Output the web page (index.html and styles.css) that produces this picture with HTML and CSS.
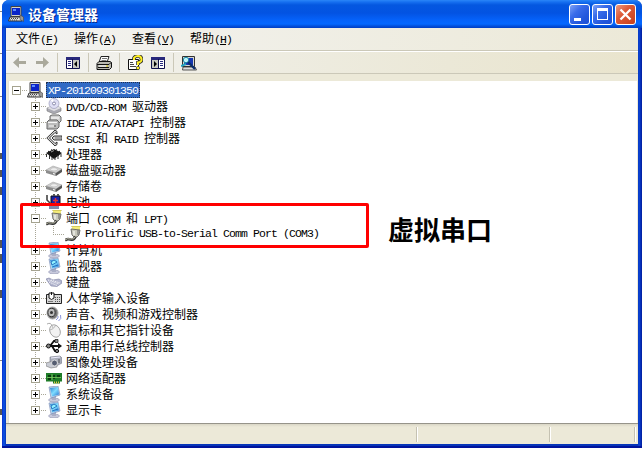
FILE: index.html
```
<!DOCTYPE html>
<html lang="zh-CN">
<head>
  <meta charset="UTF-8" />
  <title>设备管理器</title>
  <link rel="stylesheet" href="styles.css">
</head>
<body>
  <!-- shared icons -->
  <svg class="defs" width="0" height="0">
    <defs>
      <linearGradient id="screen" x1="0" y1="0" x2="1" y2="1">
        <stop offset="0" stop-color="#2a7fd0"/><stop offset="0.5" stop-color="#7fdcff"/><stop offset="1" stop-color="#2470d0"/>
      </linearGradient>
    </defs>
    <symbol id="pc" viewBox="0 0 16 16">
      <path d="M3 .5h10v10H3z" fill="#d4d4cc" stroke="#444" stroke-width="1"/>
      <path d="M4 2h8v7H4z" fill="#0a24c8"/><path d="M5 3h3v2H5z" fill="#5a8cff"/>
      <path d="M2 11h11l1 4H.5z" fill="#e0e0e0" stroke="#333" stroke-width="1"/>
      <path d="M3 12.500h8M2 14h8" stroke="#444" stroke-dasharray="1 1"/>
      <path d="M12 9l3.500 2v4.500l-3.500-2z" fill="#999" stroke="#444" stroke-width=".6"/>
    </symbol>
    <symbol id="disk" viewBox="0 0 16 16">
      <path d="M0 8l7-4 9 3-6 4z" fill="#d2d2d2" stroke="#999" stroke-width=".5"/>
      <path d="M0 8l10 3v3L0 11z" fill="#8c8c8c"/><path d="M10 11l6-4v3l-6 4z" fill="#555"/>
      <ellipse cx="8" cy="7.300" rx="3.500" ry="1.600" fill="#eee" stroke="#aaa" stroke-width=".5"/>
      <path d="M7 11.500l2 .6" stroke="#fff"/>
    </symbol>
    <symbol id="plug" viewBox="0 0 16 16">
      <path d="M7 0h8v4H7z" fill="#f4ec7a"/><path d="M6.500 .5h9" stroke="#b7a93a" stroke-dasharray="1 1"/>
      <path d="M6 3l9 1-1 5-2 2H9L7 9z" fill="#c9c9bd" stroke="#555" stroke-width=".8"/>
      <path d="M9 5v4" stroke="#fff"/><path d="M13 4v5" stroke="#666"/>
      <path d="M10.500 10.500Q9 14.500 5.500 13.500T0 14.500" fill="none" stroke="#333" stroke-width="2.600"/>
      <path d="M10.500 10.500Q9 14 5.500 13T0 14" fill="none" stroke="#c4c4b0" stroke-width="1"/>
    </symbol>
    <symbol id="monitor" viewBox="0 0 16 16">
      <ellipse cx="8" cy="14" rx="5.500" ry="1.900" fill="#c7c9dc" stroke="#888ba8" stroke-width=".5"/>
      <path d="M6 10h4v4H6z" fill="#a9aec6"/>
      <path d="M3 1l9-1 2 9-9 3z" fill="#c4d7ec" stroke="#6d84b4" stroke-width=".6"/>
      <path d="M4 2l8-1 1 7.500-7 2z" fill="url(#screen)"/>
    </symbol>
    <symbol id="display" viewBox="0 0 16 16">
      <use href="#monitor"/>
      <path d="M5 4l3-2 3 2-5 3zM6 9l6-2" fill="#8ff1ff" stroke="#165fb4" stroke-width=".8"/>
    </symbol>
  </svg>

  <!-- strip of the page behind the window -->
  <div class="behind">
    <i class="rule r1"></i><i class="rule r2"></i><i class="rule r3"></i><i class="rule r4"></i>
    <i class="ink k1"></i><i class="ink k2"></i><i class="ink k3"></i><i class="ink k4"></i><i class="ink k5"></i><i class="ink k6"></i><i class="ink k7"></i>
  </div>

  <div class="window">
    <div class="titlebar">
      <svg class="icon" viewBox="0 0 16 16"><use href="#pc"/></svg>
      <span class="title">设备管理器</span>
      <div class="buttons">
        <div class="btn"><svg viewBox="0 0 21 21"><path d="M5 14h7v3H5z" fill="#fff"/></svg></div>
        <div class="btn"><svg viewBox="0 0 21 21"><path d="M5 4h11v12H5zM6 7v8h9V7z" fill="#fff" fill-rule="evenodd"/></svg></div>
        <div class="btn close"><svg viewBox="0 0 21 21"><path d="M5.500 5.500l10 10M15.500 5.500l-10 10" stroke="#fff" stroke-width="2.300"/></svg></div>
      </div>
    </div>

    <div class="menubar">
      <span>文件<b>(<u>F</u>)</b></span>
      <span>操作<b>(<u>A</u>)</b></span>
      <span>查看<b>(<u>V</u>)</b></span>
      <span>帮助<b>(<u>H</u>)</b></span>
    </div>

    <div class="toolbar">
      <svg class="arrow" viewBox="0 0 13 11"><path d="M0 5.500L6 0v4h7v3H6v4z" fill="#aaa99c"/></svg>
      <svg class="arrow next" viewBox="0 0 13 11"><path d="M13 5.500L7 0v4H0v3h7v4z" fill="#aaa99c"/></svg>
      <i class="sep"></i>
      <svg class="icon t1" viewBox="0 0 16 16">
        <path d="M1.500 2.500h13v11h-13z" fill="#fff" stroke="#10104c"/><path d="M1 2h14v3H1z" fill="#29297c"/>
        <path d="M8 5h6v8H8z" fill="#c8c8c0"/><path d="M7.500 4v10" stroke="#10104c"/>
        <path d="M3 6.500h3M3 8.500h3M3 10.500h3" stroke="#2a2a80"/><path d="M12 6v6L9 9z" fill="#000"/>
      </svg>
      <i class="sep"></i>
      <svg class="icon t2" viewBox="0 0 16 16">
        <path d="M5 1.500h8l-2 6H3z" fill="#fff" stroke="#222"/><path d="M6 3.500h5M5.500 5.500h5" stroke="#777"/>
        <path d="M1 8.500l2-2h11l1.500 1v5l-2 2H1z" fill="#b8b8b0" stroke="#111"/>
        <path d="M1 9.500h12l2-2M2 12.500h11" fill="none" stroke="#111"/><path d="M3 11h8" stroke="#fff"/><path d="M10 11h2" stroke="#d6c400"/>
      </svg>
      <i class="sep"></i>
      <svg class="icon t3" viewBox="0 0 16 16">
        <path d="M1.500 4.500h10v10h-10z" fill="#fff" stroke="#111"/>
        <path d="M3 7.500h3M3 9.500h4M3 11.500h6" stroke="#444"/>
        <path d="M7 5V3q1-2 4-2t3.500 3-3.500 3.500V10" fill="none" stroke="#333" stroke-width="3.600"/>
        <path d="M7 5V3q1-2 4-2t3.500 3-3.500 3.500V10" fill="none" stroke="#ffef20" stroke-width="2"/>
        <circle cx="11" cy="13" r="1.700" fill="#ffef20" stroke="#333" stroke-width=".7"/>
      </svg>
      <svg class="icon t4" viewBox="0 0 16 16">
        <path d="M1.500 2.500h13v11h-13z" fill="#fff" stroke="#10104c"/><path d="M1 2h14v3H1z" fill="#29297c"/>
        <path d="M2 5h6v8H2z" fill="#c8c8c0"/><path d="M8.500 4v10" stroke="#10104c"/>
        <path d="M10 6.500h3M10 8.500h3M10 10.500h3" stroke="#2a2a80"/><path d="M4 6v6l3-3z" fill="#000"/>
      </svg>
      <i class="sep"></i>
      <svg class="icon t5" viewBox="0 0 16 16">
        <path d="M1.500 1.500h12v10h-12z" fill="#d8d8d0" stroke="#333"/><path d="M3 3h9v7H3z" fill="#1637b0"/>
        <path d="M2 12h12l1.500 3h-14z" fill="#ddd" stroke="#333" stroke-width=".8"/>
        <circle cx="5" cy="5" r="2.700" fill="#bff4fa" stroke="#1d8da8"/>
        <path d="M7 7l7 7" stroke="#0b2e6c" stroke-width="2.400"/><path d="M0 11l5-2" stroke="#24a5c0" stroke-width="2"/>
      </svg>
    </div>

    <!-- device tree -->
    <div class="content">
      <ul class="tree">
        <li class="root"><i class="box minus"></i><svg class="icon" viewBox="0 0 16 16"><use href="#pc"/></svg><span class="selected en">XP-201209301350</span></li>
        <li><i class="box"></i><svg class="icon" viewBox="0 0 16 16">
          <path d="M1 10l8-3 6 3v3l-7 3-7-3z" fill="#a9a9b2" stroke="#777" stroke-width=".6"/><path d="M1 10l7 3 7-3-6-3z" fill="#e0e0e4"/>
          <circle cx="8" cy="5.500" r="5" fill="#dfdff4" stroke="#9a9aba" stroke-width=".7"/><path d="M8 5.500L4.500 2 7 1z" fill="#fff"/><circle cx="8" cy="5.500" r="1.500" fill="#fff" stroke="#88a"/></svg><span><b>DVD/CD-ROM </b>驱动器</span></li>
        <li><i class="box"></i><svg class="icon" viewBox="0 0 16 16">
          <path d="M4 2l2-1h7l2 2v4l-2 2H4z" fill="#cfcfcf" stroke="#666"/><path d="M5 4h8" stroke="#fff"/>
          <path d="M1 8l2-2h8l2 2v5l-2 2H1z" fill="#bcbcbc" stroke="#666"/><path d="M2 8.500h9M3 12h5" stroke="#f6f6f6"/><path d="M8 12h2" stroke="#555"/></svg><span><b>IDE ATA/ATAPI </b>控制器</span></li>
        <li><i class="box"></i><svg class="icon" viewBox="0 0 16 16">
          <path d="M11 1.500L9 0 .8 8 9 16l2-1.500V12L9 13.500 3.500 8 9 2.500 11 4z" fill="#d2d2d2" stroke="#222" stroke-width=".9"/>
          <path d="M6 8l2-2h8v4H8z" fill="#ccc" stroke="#222" stroke-width=".9"/><path d="M9 8h6" stroke="#777"/></svg><span><b>SCSI </b>和<b> RAID </b>控制器</span></li>
        <li><i class="box"></i><svg class="icon" viewBox="0 0 16 16">
          <path d="M0 7l8-4 8 4-8 6z" fill="#1a1a1a"/><path d="M2 5l8 6M5 3.500l8 6M14 5l-8 6M11 3.500l-8 6" stroke="#111" stroke-width="1"/>
          <path d="M.5 8v3M3.500 9v4M6 11v3M9 11v3M12 9v4M15 8v3" stroke="#333"/><path d="M5 6l3-1.500" stroke="#999"/></svg><span>处理器</span></li>
        <li><i class="box"></i><svg class="icon" viewBox="0 0 16 16"><use href="#disk"/></svg><span>磁盘驱动器</span></li>
        <li><i class="box"></i><svg class="icon" viewBox="0 0 16 16"><use href="#disk"/></svg><span>存储卷</span></li>
        <li><i class="box"></i><svg class="icon" viewBox="0 0 16 16">
          <path d="M5 2h9v9H5z" fill="#1722a8" stroke="#111"/><path d="M7 0h2v2H7zM11 0h2v2h-2z" fill="#555"/>
          <path d="M9.500 4v5M7 6.500h5" stroke="#e43434" stroke-width="1.500"/>
          <path d="M1 1v5l3 3v5" fill="none" stroke="#444" stroke-width="1.600"/><path d="M3 11h10v4H3z" fill="#8288ab"/></svg><span>电池</span></li>
        <li><i class="box minus"></i><svg class="icon" viewBox="0 0 16 16"><use href="#plug"/></svg><span>端口<b> (COM </b>和<b> LPT)</b></span></li>
        <li class="leaf"><i class="elbow"></i><svg class="icon" viewBox="0 0 16 16"><use href="#plug"/></svg><span class="en">Prolific USB-to-Serial Comm Port (COM3)</span></li>
        <li><i class="box"></i><svg class="icon" viewBox="0 0 16 16"><use href="#monitor"/></svg><span>计算机</span></li>
        <li><i class="box"></i><svg class="icon" viewBox="0 0 16 16"><use href="#display"/></svg><span>监视器</span></li>
        <li><i class="box"></i><svg class="icon" viewBox="0 0 16 16">
          <path d="M0 5l3-1 4 2 6-1 3 2v2l-5 3.500L5 12z" fill="#b4b7cf" stroke="#7c7fa2" stroke-width=".6"/><path d="M2 6l11 4M3 8l8 3.500M5 6l9 3" stroke="#fff" stroke-dasharray="1 1"/></svg><span>键盘</span></li>
        <li><i class="box"></i><svg class="icon" viewBox="0 0 16 16">
          <path d="M.5 4.500h15v9H.5z" fill="#d6d6d6" stroke="#222"/><path d="M3 3h5v5q-2.500 3-5 0z" fill="#fff" stroke="#111"/><path d="M5.500 5V2" stroke="#111"/>
          <path d="M9 7.500h6M9 9.500h6M9 11.500h6" stroke="#555" stroke-dasharray="1 1"/><path d="M2 11.500h5" stroke="#777"/></svg><span>人体学输入设备</span></li>
        <li><i class="box"></i><svg class="icon" viewBox="0 0 16 16">
          <ellipse cx="6.500" cy="7" rx="5.500" ry="6" fill="#777" stroke="#aaa"/><ellipse cx="5.500" cy="6.500" rx="3.600" ry="4.200" fill="#bbb" stroke="#333"/><circle cx="5.500" cy="6.500" r="1.500" fill="#333"/>
          <path d="M12 10q1 2-2 4M14.500 9q1.500 4-2 6" fill="none" stroke="#8d96dc"/></svg><span>声音、视频和游戏控制器</span></li>
        <li><i class="box"></i><svg class="icon" viewBox="0 0 16 16">
          <path d="M1 2q4-2 5 2" fill="none" stroke="#aaa"/><ellipse cx="9" cy="9" rx="5" ry="6.500" transform="rotate(-28 9 9)" fill="#f2f2f2" stroke="#999" stroke-width=".8"/>
          <path d="M4 8q3 0 6-5M7 6L5.500 3" fill="none" stroke="#aaa" stroke-width=".8"/></svg><span>鼠标和其它指针设备</span></li>
        <li><i class="box"></i><svg class="icon" viewBox="0 0 16 16">
          <path d="M1 8h13M4 8l4-5h3M6 8l3 5h3" fill="none" stroke="#111" stroke-width="1.800"/><path d="M12 5l4 3-4 3z" fill="#111"/>
          <circle cx="2.500" cy="8" r="2" fill="#888" stroke="#111"/><path d="M9 1.500h3v3H9z" fill="#888" stroke="#111" stroke-width=".7"/><circle cx="11" cy="13" r="1.700" fill="#777" stroke="#111"/></svg><span>通用串行总线控制器</span></li>
        <li><i class="box"></i><svg class="icon" viewBox="0 0 16 16">
          <path d="M4 3l10-1 2 2v5l-6 3-6-2z" fill="#a8adba" stroke="#777b88" stroke-width=".6"/><path d="M5 4l9-1" stroke="#eef"/>
          <path d="M0 9l7-2 4 2v4l-6 1-5-2z" fill="#c9ccd4" stroke="#777" stroke-width=".6"/><circle cx="8.500" cy="9" r="3" fill="#555d70" stroke="#ddd"/><path d="M13 5v4" stroke="#555"/></svg><span>图像处理设备</span></li>
        <li><i class="box"></i><svg class="icon" viewBox="0 0 16 16">
          <path d="M0 3h16v8.500h-2v2H7v-2H0z" fill="#1e7c28"/><path d="M2 5h3v2H2zM2 8h3v2H2zM7 5h2v4H7zM11 5h3v3h-3z" fill="#0a3a10"/>
          <path d="M1 7.500h14M6 4v6" stroke="#7fce62" stroke-width=".8"/><path d="M8 12.500h6" stroke="#e2cc50" stroke-dasharray="1 1" stroke-width="2"/></svg><span>网络适配器</span></li>
        <li><i class="box"></i><svg class="icon" viewBox="0 0 16 16"><use href="#monitor"/></svg><span>系统设备</span></li>
        <li><i class="box"></i><svg class="icon" viewBox="0 0 16 16"><use href="#display"/></svg><span>显示卡</span></li>
      </ul>
    </div>

    <div class="statusbar"><i></i><i></i><i></i></div>
  </div>

  <!-- annotation over the window -->
  <div class="highlight"></div>
  <div class="note">虚拟串口</div>
</body>
</html>
```

FILE: styles.css
```
* {
  box-sizing: border-box;
}

body {
  margin: 0;
  width: 642px;
  height: 450px;
  overflow: hidden;
  position: relative;
  background: #fff;
  color: #000;
  font: 12px/16px "Noto Sans CJK SC", sans-serif;
}

svg {
  display: block;
  flex: none;
}

.defs {
  position: absolute;
}

.icon {
  width: 16px;
  height: 16px;
}

/* page behind */
.behind i {
  position: absolute;
  left: 0;
  width: 2px;
}

.rule { height: 1px; background: #888; }
.r1 { top: 11px; }
.r2 { top: 53px; }
.r3 { top: 96px; }
.r4 { top: 360px; }

.ink { background: #555; }
.k1 { top: 153px; height: 6px; }
.k2 { top: 170px; height: 7px; }
.k3 { top: 187px; height: 8px; }
.k4 { top: 240px; height: 8px; }
.k5 { top: 254px; height: 9px; }
.k6 { top: 290px; height: 8px; }
.k7 { top: 409px; height: 6px; }

.window {
  margin-left: 2px;
  width: 640px;
  height: 448px;
  display: flex;
  flex-direction: column;
  padding: 0 4px 4px;
  border-radius: 7px 7px 0 0;
  background: linear-gradient(90deg, #0a2ecb, #0b55e6 2px, #0634b8 4px, #0634b8 636px, #0b45d8 637px, #001c9c 640px);
  box-shadow: inset 0 -2px #00139c;
}

.titlebar {
  display: flex;
  align-items: center;
  flex: none;
  height: 28px;
  margin: 0 -4px;
  padding: 0 6px 0 6px;
  border-radius: 7px 7px 0 0;
  background: linear-gradient(#2a86f8 0, #1670f0 2px, #0457e0 5px, #0353e2 13px, #0562fa 20px, #0468ff 24px, #0250dc 26px, #003dc4 28px);
}

.title {
  margin: -1px 0 0 4px;
  font-size: 14px;
  font-weight: bold;
  color: #fff;
  text-shadow: 1px 1px #0a2a8a;
}

.buttons {
  display: flex;
  gap: 2px;
  margin-left: auto;
  padding-top: 1px;
}

.btn {
  width: 21px;
  height: 21px;
  border: 1px solid #fff;
  border-radius: 3px;
  background: linear-gradient(135deg, #7ea2f6, #3a6cea 35%, #2357dc 70%, #1c4fd6);
}

.btn svg {
  width: 21px;
  height: 21px;
  margin: -1px;
}

.btn.close {
  background: linear-gradient(135deg, #ee9a80, #dd5a38 40%, #c8401c);
}

.menubar {
  display: flex;
  flex: none;
  gap: 16px;
  height: 23px;
  padding: 2px 10px 0;
  background: linear-gradient(90deg, #f3f3f1, #ece9d8);
  border-bottom: 1px solid #cbc8b8;
}

b,
.en {
  font: 11.500px/16px "Liberation Mono", monospace;
  letter-spacing: -0.900px;
  white-space: pre;
}

b {
  line-height: 0;
}

.menubar span {
  width: 42px;
  white-space: nowrap;
}

.toolbar {
  display: flex;
  align-items: center;
  flex: none;
  height: 23px;
  padding-left: 7px;
  background: linear-gradient(90deg, #f3f3f1, #ebe8d7 70%, #e9e4cd);
  border-top: 1px solid #fff;
  border-bottom: 1px solid #cbc8b8;
}

.arrow {
  width: 13px;
  height: 11px;
}

.next {
  margin: 0 8px 0 10px;
}

.sep {
  width: 1px;
  height: 19px;
  background: #cbc8b8;
}

.t1,
.t2,
.t3 {
  margin: 0 7px;
}

.t4 { margin-right: 7px; }
.t5 { margin-left: 7px; }

.content {
  flex: none;
  height: 349px;
  padding: 7px 1px 0 2px;
  background: #ece9d8;
}

.tree {
  height: 342px;
  margin: 0;
  padding: 1px 0 0 27px;
  list-style: none;
  background: repeating-linear-gradient(#a8a697 0 1px, #fff 1px 2px) 27px 17px / 1px 312px no-repeat #fff;
  box-shadow: inset 1px 0 #e4e2d8;
}

.tree li {
  display: flex;
  align-items: center;
  height: 16px;
  margin-left: -4px;
  white-space: nowrap;
}

.tree li > span {
  height: 16px;
  margin-top: -1px;
  margin-left: 4px;
}

.box {
  flex: none;
  width: 9px;
  height: 9px;
  margin-right: 6px;
  border: 1px solid #a5a390;
  background: linear-gradient(#000, #000) 1px 3px / 5px 1px no-repeat, linear-gradient(#000, #000) 3px 1px / 1px 5px no-repeat #fff;
}

.box.minus {
  background: linear-gradient(#000, #000) 1px 3px / 5px 1px no-repeat #fff;
}

/* dotted stub between the box and the icon */
.box::after {
  content: "";
  display: block;
  width: 6px;
  height: 1px;
  margin: 3px 0 0 8px;
  background: repeating-linear-gradient(90deg, #fff 0 1px, #a8a697 1px 2px);
}

.tree .root {
  margin-left: -23px;
}

.tree .root .selected {
  margin: 0 0 0 3px;
  padding: 0 1px;
  line-height: 15px;
  color: #fff;
  background: #316ac5;
  border: 1px dotted #20304c;
}

.tree .leaf {
  padding-left: 22px;
}

.tree .leaf .en {
  margin-top: 0;
}

.elbow {
  width: 12px;
  height: 9px;
  margin-top: -8px;
  background:
    repeating-linear-gradient(#a8a697 0 1px, #fff 1px 2px) 0 0 / 1px 9px no-repeat,
    repeating-linear-gradient(90deg, #a8a697 0 1px, #fff 1px 2px) 0 8px / 12px 1px no-repeat;
}

.statusbar {
  display: flex;
  flex: 1;
  justify-content: flex-end;
  padding: 3px 2px 2px;
  border-top: 1px solid #96948a;
  background: linear-gradient(#d9d6c6, #ece9d8 3px);
}

.statusbar i {
  width: 133px;
  border-right: 1px solid #fff;
  box-shadow: inset -1px 0 #c5c2b2;
}

.statusbar i:last-child {
  width: 85px;
}

.highlight {
  position: absolute;
  left: 20px;
  top: 203px;
  width: 349px;
  height: 45px;
  border: 3px solid #f00;
  border-radius: 2px;
}

.note {
  position: absolute;
  left: 388px;
  top: 212px;
  font-size: 26px;
  line-height: 34px;
  font-weight: bold;
}
```
